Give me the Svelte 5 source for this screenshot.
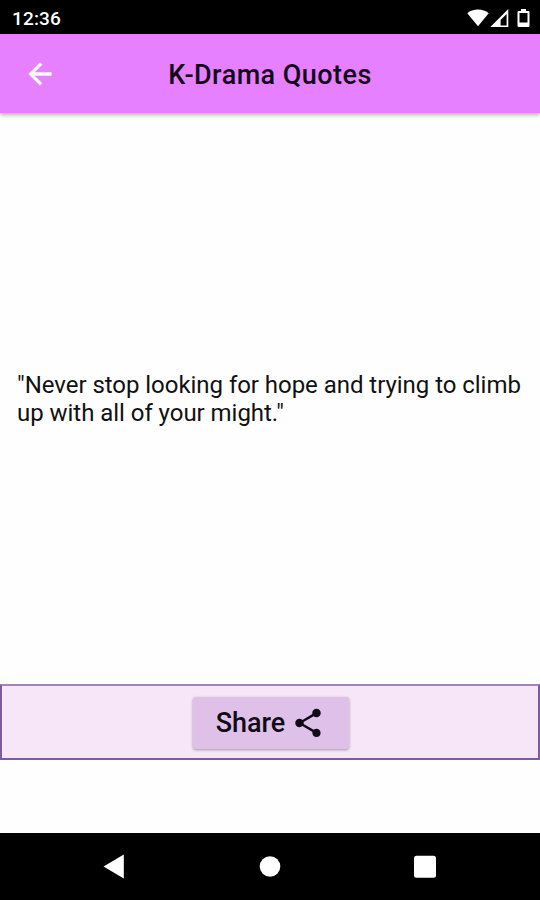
<script lang="ts">
	/**
	 * Quote screen
	 * Shows a single quote with a share bar between the app bar and system bars
	 */
	const time = '12:36';
	const title = 'K-Drama Quotes';
	const quote = '"Never stop looking for hope and trying to climb up with all of your might."';
</script>

<div class="screen">
	<div class="status-bar">
		<span class="time">{time}</span>
		<div class="status-icons">
			<svg class="wifi" width="22" height="18" viewBox="0 0 22 18">
				<path d="M11 17.3L0.3 4.2C3.2 1.8 6.9 0.5 11 0.5s7.8 1.3 10.7 3.7z" fill="#fff" />
			</svg>
			<svg class="signal" width="19" height="19" viewBox="0 0 19 19">
				<path d="M0.3 18L18.3 0v18zM10.6 16.4h6V5l-6 6z" fill="#fff" fill-rule="evenodd" />
			</svg>
			<svg class="battery" width="13" height="19" viewBox="0 0 13 19">
				<path
					d="M4 0h5v2h2.2a1.3 1.3 0 0 1 1.3 1.3v13.4a1.3 1.3 0 0 1-1.3 1.3H1.8a1.3 1.3 0 0 1-1.3-1.3V3.3a1.3 1.3 0 0 1 1.3-1.3H4zM2.5 4v9.4h8V4z"
					fill="#fff"
					fill-rule="evenodd"
				/>
			</svg>
		</div>
	</div>

	<header class="app-bar">
		<button class="back" type="button" aria-label="Back">
			<svg width="34" height="34" viewBox="0 0 24 24">
				<path
					d="M20 11H7.83l5.59-5.59L12 4l-8 8 8 8 1.41-1.41L7.83 13H20v-2z"
					fill="#fff"
					stroke="#fff"
					stroke-width="0.3"
				/>
			</svg>
		</button>
		<h1 class="title">{title}</h1>
	</header>

	<main class="content">
		<p class="quote">{quote}</p>
	</main>

	<div class="share-bar">
		<button class="share" type="button">
			<span class="share-label">Share</span>
			<svg width="34" height="34" viewBox="0 0 24 24">
				<path
					d="M18 16.08c-.76 0-1.44.3-1.96.77L8.91 12.7c.05-.23.09-.46.09-.7s-.04-.47-.09-.7l7.05-4.11c.54.5 1.25.81 2.04.81 1.66 0 3-1.34 3-3s-1.34-3-3-3-3 1.34-3 3c0 .24.04.47.09.7L8.04 9.81C7.5 9.31 6.79 9 6 9c-1.66 0-3 1.34-3 3s1.34 3 3 3c.79 0 1.5-.31 2.04-.81l7.12 4.16c-.05.21-.08.43-.08.65 0 1.61 1.31 2.92 2.92 2.92s2.92-1.31 2.92-2.92-1.31-2.92-2.92-2.92z"
					fill="#100c16"
				/>
			</svg>
		</button>
	</div>

	<nav class="nav-bar">
		<svg width="22" height="26" viewBox="0 0 22 26">
			<path d="M0.5 12.5L20.8 0.5v24z" fill="#fff" />
		</svg>
		<svg width="22" height="22" viewBox="0 0 22 22">
			<circle cx="11" cy="10.5" r="10.3" fill="#fff" />
		</svg>
		<svg width="22" height="24" viewBox="0 0 22 24">
			<rect x="0" y="0.7" width="22" height="22" rx="2.5" fill="#fff" />
		</svg>
	</nav>
</div>

<style>
	:global(body) {
		margin: 0;
		background: #fff;
	}

	.screen {
		display: flex;
		flex-direction: column;
		width: 540px;
		height: 900px;
		overflow: hidden;
		background: #fefefe;
		color: #111;
		font-family: Roboto, 'Liberation Sans', sans-serif;
	}

	svg {
		display: block;
		flex: none;
	}

	button {
		padding: 0;
		border: none;
		background: none;
		color: inherit;
		font: inherit;
	}

	/* System status bar */
	.status-bar {
		display: flex;
		align-items: center;
		justify-content: space-between;
		box-sizing: border-box;
		flex: none;
		height: 34px;
		padding: 2px 10px 0 12px;
		background: #000;
	}

	.time {
		padding-top: 1px;
		color: #fff;
		font-size: 19px;
		font-weight: 500;
		letter-spacing: 0.15px;
		line-height: 22px;
	}

	.status-icons {
		display: flex;
		align-items: center;
	}

	.signal {
		margin-left: 1px;
	}

	.battery {
		margin-left: 8px;
	}

	/* App bar */
	.app-bar {
		display: grid;
		grid-template-columns: 80px 1fr 80px;
		align-items: center;
		flex: none;
		height: 79px;
		background: #e680ff;
		box-shadow: 0 2px 4px rgba(0, 0, 0, 0.3);
	}

	.back {
		display: flex;
		justify-content: center;
	}

	.title {
		margin: 0;
		padding-top: 2px;
		color: #120818;
		font-size: 27px;
		font-weight: 500;
		letter-spacing: 0.45px;
		line-height: 32px;
		text-align: center;
	}

	.content {
		display: flex;
		align-items: center;
		flex: 1;
		padding: 0 16px 0 17px;
	}

	.quote {
		margin: 0;
		font-size: 24px;
		letter-spacing: -0.04px;
		line-height: 28px;
	}

	/* Share bar */
	.share-bar {
		display: flex;
		align-items: center;
		justify-content: center;
		box-sizing: border-box;
		flex: none;
		height: 76px;
		margin-bottom: 73px;
		border: 2px solid #7c5ca0;
		border-top-color: #a285bd;
		background: #f6e6f8;
	}

	.share {
		display: flex;
		align-items: center;
		justify-content: center;
		gap: 6px;
		width: 156px;
		height: 52px;
		margin: 1px 0 0 1px;
		border-radius: 3px;
		background: #dfc0e8;
		box-shadow: 0 1px 3px rgba(0, 0, 0, 0.35);
	}

	.share-label {
		padding-top: 1px;
		color: #100c16;
		font-size: 27px;
		font-weight: 500;
		line-height: 32px;
	}

	/* System navigation bar */
	.nav-bar {
		display: flex;
		align-items: center;
		justify-content: space-between;
		box-sizing: border-box;
		flex: none;
		height: 67px;
		padding: 0 104px 0 103px;
		background: #000;
	}

	.nav-bar svg:nth-child(2) {
		margin-left: 1px;
	}
</style>
